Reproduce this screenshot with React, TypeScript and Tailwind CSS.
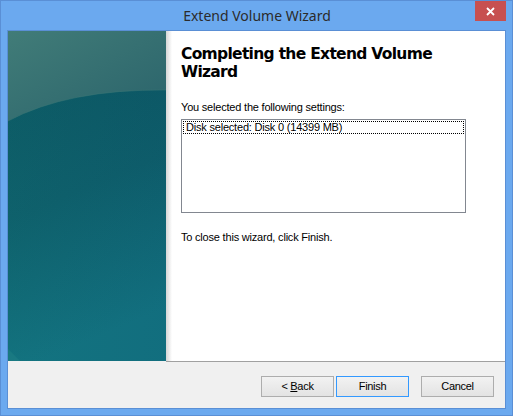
const sans = { fontFamily: '"Liberation Sans", Arial, sans-serif' };

function SidePanel() {
  return (
    <svg width="158" height="330" viewBox="0 0 158 330" className="block shrink-0">
      <defs>
        <linearGradient id="topGlow" x1="0" y1="0" x2="1" y2="1">
          <stop offset="0" stopColor="#417c78" />
          <stop offset="1" stopColor="#2a636b" />
        </linearGradient>
        <linearGradient id="body" x1="0" y1="0" x2="0.2" y2="1">
          <stop offset="0" stopColor="#0a535e" />
          <stop offset="0.55" stopColor="#0d5d69" />
          <stop offset="1" stopColor="#127280" />
        </linearGradient>
        <linearGradient id="bodySide" x1="0" y1="0" x2="1" y2="0">
          <stop offset="0" stopColor="#1a8080" stopOpacity="0.12" />
          <stop offset="1" stopColor="#104d70" stopOpacity="0.1" />
        </linearGradient>
      </defs>
      <rect width="158" height="330" fill="url(#body)" />
      <rect width="158" height="330" fill="url(#bodySide)" />
      <path d="M0,0 H158 V59 Q60,58 0,90 Z" fill="url(#topGlow)" />
      <path d="M0,90 Q60,58 158,59" fill="none" stroke="#3c7775" strokeOpacity="0.5" strokeWidth="1" />
      <path d="M0,318 L12,330 L0,330 Z" fill="#2a8a8c" fillOpacity="0.3" />
    </svg>
  );
}

function WizButton({ children, primary }: { children: React.ReactNode; primary?: boolean }) {
  return (
    <div
      className={`w-[73px] h-[21px] flex items-center justify-center border text-[11px] tracking-[-0.3px] text-black bg-gradient-to-b from-[#f2f2f2] to-[#e3e3e3] whitespace-pre ${
        primary ? "border-[#3399ff]" : "border-[#adadad]"
      }`}
      style={sans}
    >
      {children}
    </div>
  );
}

export default function App() {
  return (
    <div className="w-[513px] h-[416px] bg-[#6ba9ef] border border-[#5a8fd5] flex flex-col">
      {/* Title bar */}
      <div className="h-[29px] flex items-start relative">
        <div
          className="flex-1 text-center text-[14px] leading-[30px] text-[#2b2b2b] pl-[1px]"
          style={{ fontFamily: '"Noto Sans", "Open Sans", sans-serif' }}
        >
          Extend Volume Wizard
        </div>
        <div className="absolute right-[6px] top-0 w-[31px] h-[20px] bg-[#c75050] flex items-center justify-center">
          <svg width="9" height="9" viewBox="0 0 9 9">
            <path d="M1,1 L8,8 M8,1 L1,8" stroke="#fff" strokeWidth="1.8" />
          </svg>
        </div>
      </div>

      {/* Client */}
      <div className="mx-[6px] border border-[#5a8fd5] bg-[#f0f0f0] flex flex-col h-[379px]">
        <div className="flex items-start h-[331px]">
          <SidePanel />
          <div className="flex-1 h-[331px] bg-white border-b border-[#a0a0a0] flex">
            <div className="w-[6px] h-full bg-gradient-to-r from-[#d6d6d6] to-white" />
            <div className="pl-[9px] pt-[14px] flex flex-col">
              <div
                className="text-[15.5px] leading-[18px] font-bold tracking-[-0.7px] text-black w-[285px]"
                style={{ fontFamily: '"DejaVu Sans", Verdana, sans-serif' }}
              >
                Completing the Extend Volume Wizard
              </div>
              <div className="mt-[20px] text-[11px] leading-[13px] tracking-[-0.2px] text-black" style={sans}>
                You selected the following settings:
              </div>
              <div className="mt-[5px] w-[285px] h-[94px] border border-[#828790] bg-white p-[1px]">
                <div
                  className="h-[13px] border border-dotted border-black pl-[2px] text-[11px] leading-[11px] tracking-[-0.2px] text-black"
                  style={sans}
                >
                  Disk selected: Disk 0 (14399 MB)
                </div>
              </div>
              <div className="mt-[18px] text-[11px] leading-[13px] tracking-[-0.2px] text-black" style={sans}>
                To close this wizard, click Finish.
              </div>
            </div>
          </div>
        </div>
        <div className="flex justify-end pt-[14px] pr-[11px]">
          <div className="flex gap-[2px]">
            <WizButton>
              {"< "}
              <span className="underline">B</span>
              {"ack"}
            </WizButton>
            <WizButton primary>Finish</WizButton>
          </div>
          <div className="ml-[12px]">
            <WizButton>Cancel</WizButton>
          </div>
        </div>
      </div>
    </div>
  );
}
